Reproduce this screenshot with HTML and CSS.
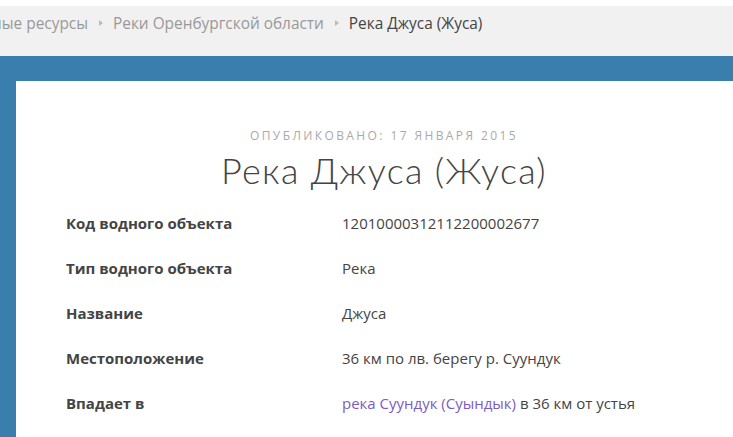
FILE: index.html
```html
<!DOCTYPE html>
<html lang="ru">
<head>
  <meta charset="UTF-8">
  <meta name="viewport" content="width=device-width, initial-scale=1.0">
  <title>Река Джуса (Жуса)</title>
  <link rel="stylesheet" href="styles.css">
</head>
<body>
  <nav class="crumbs">
    <div class="crumbs-inner">
      <a href="#">Водные ресурсы</a>
      <span class="sep"></span>
      <a href="#">Реки Оренбургской области</a>
      <span class="sep"></span>
      <span class="current">Река Джуса (Жуса)</span>
    </div>
  </nav>
  <div class="site">
    <article class="card">
      <div class="meta">Опубликовано: 17 января 2015</div>
      <h1 class="title">Река Джуса (Жуса)</h1>
      <table class="info">
        <tr><th>Код водного объекта</th><td>12010000312112200002677</td></tr>
        <tr><th>Тип водного объекта</th><td>Река</td></tr>
        <tr><th>Название</th><td>Джуса</td></tr>
        <tr><th>Местоположение</th><td>36 км по лв. берегу р. Суундук</td></tr>
        <tr><th>Впадает в</th><td><a href="#">река Суундук (Суындык)</a> в 36 км от устья</td></tr>
      </table>
    </article>
  </div>
</body>
</html>
```

FILE: styles.css
```css
body { margin: 0; padding: 0; font-family: "Open Sans", sans-serif; color: #444; background: #fff; }
.crumbs { margin-top: 6px; height: 50px; background: #f1f1f1; overflow: hidden; }
.crumbs-inner { display: flex; align-items: center; height: 22px; padding-top: 6px; white-space: nowrap; font-size: 15.4px; margin-left: -36px; }
.crumbs a { color: #999; text-decoration: none; }
.crumbs .current { color: #444; }
.sep { width: 0; height: 0; margin: 0 10px 0 11px; border-left: 4px solid #bbb; border-top: 3px solid transparent; border-bottom: 3px solid transparent; }
.site { background: #3a7eae; padding: 25px 0 0 16px; height: 356px; overflow: hidden; }
.card { background: #fff; padding: 46px 31px 20px 50px; min-height: 380px; }
.meta { text-align: center; font-size: 12px; letter-spacing: 2.4px; text-transform: uppercase; color: #aaa; line-height: 18px; }
.title { text-align: center; font-family: Lato, sans-serif; font-weight: 300; font-size: 36px; line-height: 46px; margin: 2px 0 7px; color: #444; letter-spacing: 1.3px; }
.info { border-collapse: collapse; font-size: 15px; }
.info th { text-align: left; font-weight: 700; width: 276px; padding: 0; height: 45px; color: #444; }
.info td { padding: 0; height: 45px; color: #444; }
.info a { color: #7c5cc4; text-decoration: none; }
```
